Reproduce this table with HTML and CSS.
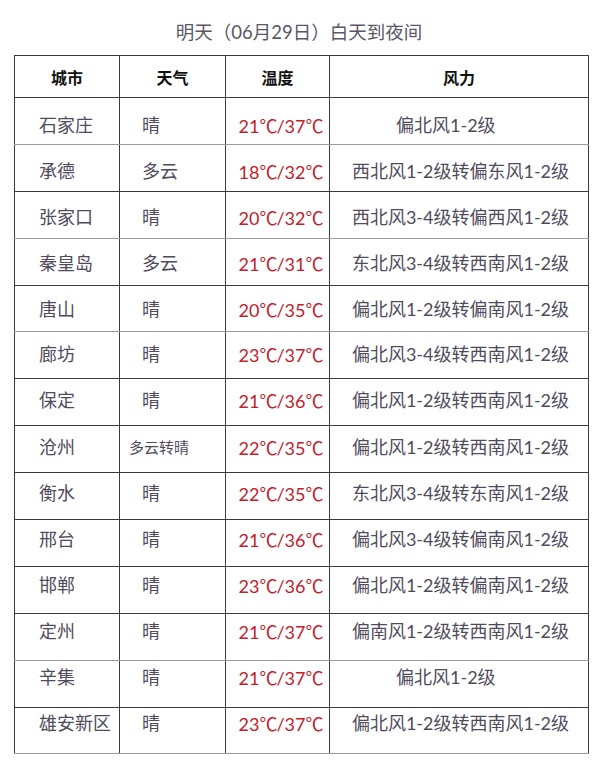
FILE: index.html
```html
<!DOCTYPE html>
<html lang="zh-CN">
<head>
<meta charset="utf-8">
<title>明天（06月29日）白天到夜间</title>
<link rel="stylesheet" href="styles.css">
</head>
<body>
<div class="page">
  <h1 class="title">明天（06月29日）白天到夜间</h1>
  <table class="forecast">
    <colgroup>
      <col class="c-city"><col class="c-wx"><col class="c-temp"><col class="c-wind">
    </colgroup>
    <thead>
      <tr><th>城市</th><th>天气</th><th>温度</th><th>风力</th></tr>
    </thead>
    <tbody>
      <tr><td class="city">石家庄</td><td class="wx">晴</td><td class="temp">21<span class="deg">℃</span>/37<span class="deg">℃</span></td><td class="wind short">偏北风1-2级</td></tr>
      <tr><td class="city">承德</td><td class="wx">多云</td><td class="temp">18<span class="deg">℃</span>/32<span class="deg">℃</span></td><td class="wind">西北风1-2级转偏东风1-2级</td></tr>
      <tr><td class="city">张家口</td><td class="wx">晴</td><td class="temp">20<span class="deg">℃</span>/32<span class="deg">℃</span></td><td class="wind">西北风3-4级转偏西风1-2级</td></tr>
      <tr><td class="city">秦皇岛</td><td class="wx">多云</td><td class="temp">21<span class="deg">℃</span>/31<span class="deg">℃</span></td><td class="wind">东北风3-4级转西南风1-2级</td></tr>
      <tr><td class="city">唐山</td><td class="wx">晴</td><td class="temp">20<span class="deg">℃</span>/35<span class="deg">℃</span></td><td class="wind">偏北风1-2级转偏南风1-2级</td></tr>
      <tr><td class="city">廊坊</td><td class="wx">晴</td><td class="temp">23<span class="deg">℃</span>/37<span class="deg">℃</span></td><td class="wind">偏北风3-4级转西南风1-2级</td></tr>
      <tr><td class="city">保定</td><td class="wx">晴</td><td class="temp">21<span class="deg">℃</span>/36<span class="deg">℃</span></td><td class="wind">偏北风1-2级转西南风1-2级</td></tr>
      <tr><td class="city">沧州</td><td class="wx small">多云转晴</td><td class="temp">22<span class="deg">℃</span>/35<span class="deg">℃</span></td><td class="wind">偏北风1-2级转西南风1-2级</td></tr>
      <tr><td class="city">衡水</td><td class="wx">晴</td><td class="temp">22<span class="deg">℃</span>/35<span class="deg">℃</span></td><td class="wind">东北风3-4级转东南风1-2级</td></tr>
      <tr><td class="city">邢台</td><td class="wx">晴</td><td class="temp">21<span class="deg">℃</span>/36<span class="deg">℃</span></td><td class="wind">偏北风3-4级转偏南风1-2级</td></tr>
      <tr><td class="city">邯郸</td><td class="wx">晴</td><td class="temp">23<span class="deg">℃</span>/36<span class="deg">℃</span></td><td class="wind">偏北风1-2级转偏南风1-2级</td></tr>
      <tr><td class="city">定州</td><td class="wx">晴</td><td class="temp">21<span class="deg">℃</span>/37<span class="deg">℃</span></td><td class="wind">偏南风1-2级转西南风1-2级</td></tr>
      <tr><td class="city">辛集</td><td class="wx">晴</td><td class="temp">21<span class="deg">℃</span>/37<span class="deg">℃</span></td><td class="wind short">偏北风1-2级</td></tr>
      <tr><td class="city">雄安新区</td><td class="wx">晴</td><td class="temp">23<span class="deg">℃</span>/37<span class="deg">℃</span></td><td class="wind">偏北风1-2级转西南风1-2级</td></tr>
    </tbody>
  </table>
</div>
</body>
</html>
```

FILE: styles.css
```css
html, body {
  margin: 0;
  padding: 0;
  background: #ffffff;
}

body {
  font-family: Lato, "Noto Sans CJK SC", "Noto Sans", sans-serif;
  color: #4f4b5c;
}

.page {
  width: 600px;
  padding: 0 0 0 14px;
  box-sizing: border-box;
}

.title {
  margin: 0;
  width: 574px;
  height: 55px;
  padding-top: 19px;
  padding-right: 4px;
  box-sizing: border-box;
  font-size: 18.5px;
  line-height: 26px;
  font-weight: 400;
  text-align: center;
  color: #5a5766;
}

.forecast {
  width: 574px;
  border-collapse: collapse;
  table-layout: fixed;
}

.c-city { width: 105px; }
.c-wx { width: 106px; }
.c-temp { width: 104px; }
.c-wind { width: 259px; }

.forecast th,
.forecast td {
  border-left: 1px solid #3a3a3a;
  border-right: 1px solid #3a3a3a;
  border-bottom: 1px solid #3a3a3a;
  padding: 0;
  white-space: nowrap;
}

.forecast th {
  border-top: 1px solid #3a3a3a;
  height: 41px;
  font-family: "Noto Sans CJK SC", sans-serif;
  font-size: 16px;
  font-weight: 700;
  color: #111111;
  text-align: center;
  vertical-align: middle;
}

.forecast td {
  height: 46.9px;
  box-sizing: border-box;
  font-size: 18px;
  line-height: 22px;
  vertical-align: top;
}

.forecast td.city {
  text-align: left;
  padding-left: 24px;
}

.forecast td.wx {
  text-align: left;
  padding-left: 22px;
}

.forecast td.wx.small {
  font-size: 15px;
  padding-left: 9px;
}

.forecast td.temp {
  text-align: center;
  padding-left: 6px;
  color: #c4202a;
}

.deg {
  font-family: "Noto Sans CJK SC", sans-serif;
  letter-spacing: -1px;
}

.forecast td.wind {
  text-align: center;
  padding-left: 3px;
}

.forecast td.wind.short {
  text-align: left;
  padding-left: 66px;
}

/* lighter rules between some rows, as in the scanned table */
.forecast tbody tr:nth-child(1) td,
.forecast tbody tr:nth-child(3) td,
.forecast tbody tr:nth-child(5) td,
.forecast tbody tr:nth-child(12) td,
.forecast tbody tr:nth-child(14) td {
  border-bottom-color: #9a9a9a;
}

/* text drifts upward in the lower rows of the original */
.forecast tbody tr:nth-child(1) td { padding-top: 16px; }
.forecast tbody tr:nth-child(2) td { padding-top: 15px; }
.forecast tbody tr:nth-child(3) td { padding-top: 14px; }
.forecast tbody tr:nth-child(4) td { padding-top: 13px; }
.forecast tbody tr:nth-child(5) td { padding-top: 12px; }
.forecast tbody tr:nth-child(6) td { padding-top: 11px; }
.forecast tbody tr:nth-child(7) td { padding-top: 10px; }
.forecast tbody tr:nth-child(8) td { padding-top: 10px; }
.forecast tbody tr:nth-child(9) td { padding-top: 9px; }
.forecast tbody tr:nth-child(10) td { padding-top: 8px; }
.forecast tbody tr:nth-child(11) td { padding-top: 7px; }
.forecast tbody tr:nth-child(12) td { padding-top: 6px; }
.forecast tbody tr:nth-child(13) td { padding-top: 5px; }
.forecast tbody tr:nth-child(14) td { padding-top: 4px; }
```
